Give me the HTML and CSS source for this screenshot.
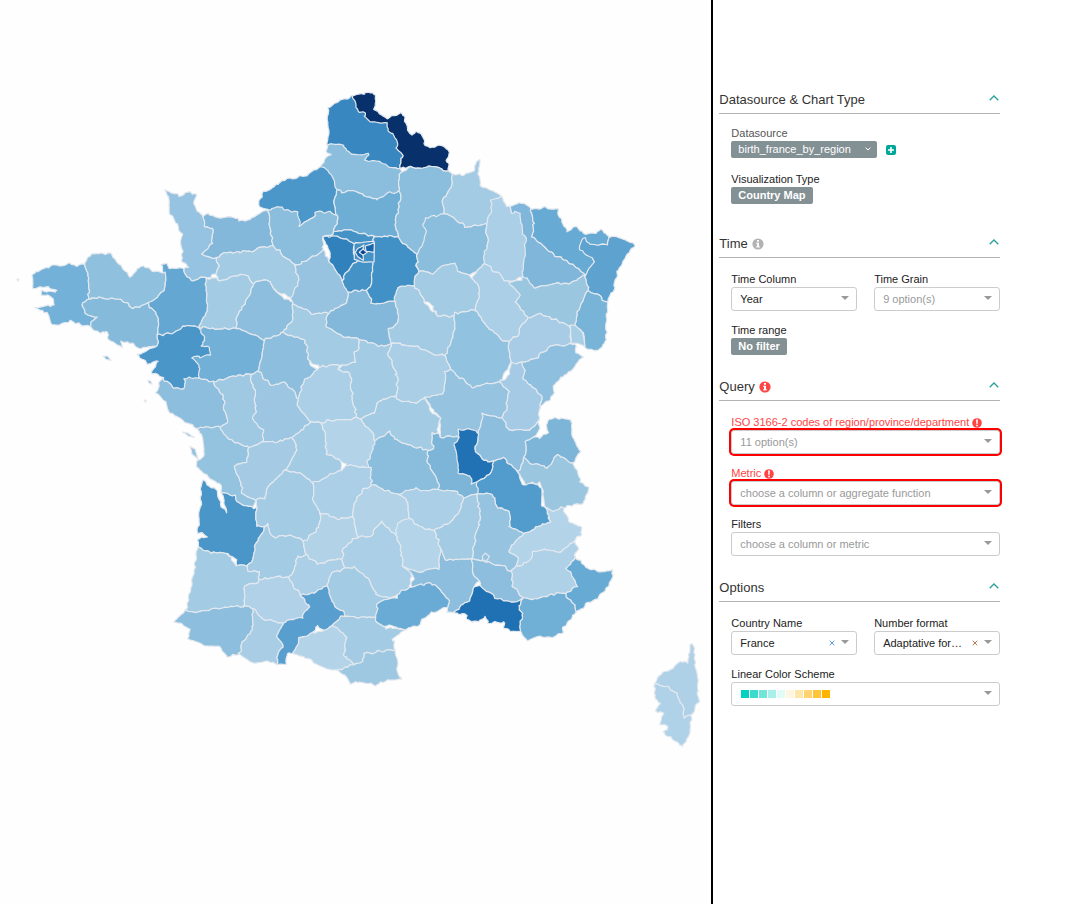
FILE: index.html
```html
<!DOCTYPE html>
<html lang="en">
<head>
<meta charset="utf-8">
<title>Country Map</title>
<link rel="stylesheet" href="styles.css">
</head>
<body>
<main class="explore">
  <section class="chart" aria-label="Country map of France">
    <svg class="map" id="map" viewBox="0 0 711 760" role="img" aria-label="Births by department"></svg>
  </section>
  <aside class="panel">
    <section class="group group-first">
      <header class="group-head"><h2>Datasource &amp; Chart Type</h2><button class="fold" type="button" aria-label="Collapse"><svg viewBox="0 0 10 6"><path d="M.7 5.3 5 1l4.3 4.3"/></svg></button></header>
      <div class="fields">
        <div class="field"><span class="label muted">Datasource</span>
          <div class="line"><button class="pill pill-menu" type="button">birth_france_by_region<svg viewBox="0 0 6 4"><path d="M.6.6 3 3 5.4.6"/></svg></button><button class="add" type="button" aria-label="Add"><svg viewBox="0 0 10 10"><rect width="10" height="10" rx="2"/><path d="M5 2v6M2 5h6"/></svg></button></div></div>
        <div class="field field-tall"><span class="label">Visualization Type</span><button class="pill" type="button">Country Map</button></div>
      </div>
    </section>
    <section class="group">
      <header class="group-head"><h2>Time</h2><svg class="info" viewBox="0 0 12 12"><circle cx="6" cy="6" r="5.6"/><path d="M5 2h2v1.7H5zM4.3 4.7H7v3.6h.8v1.3H4.2V8.3H5V6h-.7z"/></svg><button class="fold" type="button" aria-label="Collapse"><svg viewBox="0 0 10 6"><path d="M.7 5.3 5 1l4.3 4.3"/></svg></button></header>
      <div class="fields">
        <div class="pair">
          <div class="field"><label class="label" for="tc">Time Column</label><div class="box"><select id="tc"><option>Year</option></select></div></div>
          <div class="field"><label class="label" for="tg">Time Grain</label><div class="box"><select id="tg" class="hint"><option>9 option(s)</option></select></div></div>
        </div>
        <div class="field"><span class="label">Time range</span><button class="pill" type="button">No filter</button></div>
      </div>
    </section>
    <section class="group">
      <header class="group-head"><h2>Query</h2><svg class="info error" viewBox="0 0 12 12"><circle cx="6" cy="6" r="5.6"/><path d="M5 2h2v1.7H5zM4.3 4.7H7v3.6h.8v1.3H4.2V8.3H5V6h-.7z"/></svg><button class="fold" type="button" aria-label="Collapse"><svg viewBox="0 0 10 6"><path d="M.7 5.3 5 1l4.3 4.3"/></svg></button></header>
      <div class="fields">
        <div class="field"><label class="label bad" for="iso">ISO 3166-2 codes of region/province/department<svg class="warn" viewBox="0 0 10 10"><circle cx="5" cy="5" r="4.8"/><path d="M4.1 1.5h1.8L5.6 6H4.4zM4.2 6.8h1.6v1.5H4.2z"/></svg></label><div class="box box-bad"><select id="iso" class="hint"><option>11 option(s)</option></select></div></div>
        <div class="field"><label class="label bad" for="metric">Metric<svg class="warn" viewBox="0 0 10 10"><circle cx="5" cy="5" r="4.8"/><path d="M4.1 1.5h1.8L5.6 6H4.4zM4.2 6.8h1.6v1.5H4.2z"/></svg></label><div class="box box-bad"><select id="metric" class="hint"><option>choose a column or aggregate function</option></select></div></div>
        <div class="field"><label class="label" for="filters">Filters</label><div class="box"><select id="filters" class="hint"><option>choose a column or metric</option></select></div></div>
      </div>
    </section>
    <section class="group">
      <header class="group-head"><h2>Options</h2><button class="fold" type="button" aria-label="Collapse"><svg viewBox="0 0 10 6"><path d="M.7 5.3 5 1l4.3 4.3"/></svg></button></header>
      <div class="fields">
        <div class="pair">
          <div class="field"><label class="label" for="country">Country Name</label><div class="box clearable"><select id="country"><option>France</option></select><button class="clear clear-blue" type="button" aria-label="Clear"><svg viewBox="0 0 6 6"><path d="M.7.7l4.6 4.6M5.3.7.7 5.3"/></svg></button></div></div>
          <div class="field"><label class="label" for="nf">Number format</label><div class="box clearable"><select id="nf"><option>Adaptative formatting</option></select><button class="clear" type="button" aria-label="Clear"><svg viewBox="0 0 6 6"><path d="M.7.7l4.6 4.6M5.3.7.7 5.3"/></svg></button></div></div>
        </div>
        <div class="field"><span class="label" id="scheme-label">Linear Color Scheme</span><div class="box"><button class="scheme" type="button" aria-labelledby="scheme-label"><i class="s1"></i><i class="s2"></i><i class="s3"></i><i class="s4"></i><i class="s5"></i><i class="s6"></i><i class="s7"></i><i class="s8"></i><i class="s9"></i><i class="s10"></i></button></div></div>
      </div>
    </section>
  </aside>
</main>
<script src="map.js"></script>
</body>
</html>
```
FILE: styles.css
```css
* { box-sizing: border-box; }
body { margin: 0; background: #fff; color: #333; font: 11px/15px "Liberation Sans", Arial, sans-serif; }
.explore { display: grid; grid-template-columns: minmax(0, 2fr) minmax(0, 1fr); min-height: 100vh; }
.chart { background: #fefefe; }
.map { display: block; width: 100%; }
.map path { stroke: #e3e8ee; stroke-width: 1.2; stroke-linejoin: round; }
.panel { border-left: 2px solid #000; padding: 90px 67px 20px 6px; }
.group { margin-bottom: 22px; }
.group-first { margin-bottom: 30px; }
.group-head { display: flex; align-items: center; gap: 4px; height: 24px; padding-bottom: 4px; border-bottom: 1px solid #b3b3b3; }
h2 { margin: 0; font-size: 13px; line-height: 18px; font-weight: 400; color: #333; }
button { font: inherit; border: 0; padding: 0; background: none; }
.fold { margin-left: auto; display: flex; padding: 0 1px 4px; }
.fold svg { width: 10px; height: 6px; fill: none; stroke: #2aa198; stroke-width: 1.3; }
.info { width: 12px; height: 12px; fill: #b3b3b3; }
.info path, .warn path { fill: #fff; }
.info.error, .warn { fill: #ff4444; }
.warn { width: 10px; height: 10px; margin-left: 3px; }
.fields { display: flex; flex-direction: column; gap: 12px; padding: 14px 0 0 12px; }
.group-first .fields { padding-top: 12px; }
.field { display: flex; flex-direction: column; align-items: flex-start; min-width: 0; }
.field-tall { margin-top: 2px; }
.pair { display: grid; grid-template-columns: minmax(0, 1fr) minmax(0, 1fr); gap: 17px; }
.label { display: flex; align-items: center; line-height: 15px; white-space: nowrap; color: #222; }
.muted { color: #555; }
.bad { color: #ff4444; }
.line { display: flex; align-items: center; gap: 9px; }
.pill { display: flex; align-items: center; height: 17px; padding: 0 7px 1px; background: #839094; border-radius: 2px; color: #fff; font-weight: 700; white-space: nowrap; }
.pill-menu { font-weight: 400; padding-right: 6px; gap: 14px; }
.pill-menu svg { width: 6px; height: 4px; fill: none; stroke: #fff; }
.add { display: flex; }
.add svg { width: 10px; height: 10px; fill: #00a699; stroke: #fff; stroke-width: 1.6; }
.add rect { stroke: none; }
.box { position: relative; width: 100%; height: 24px; border: 1px solid #ccc; border-radius: 3px; background: #fff; }
.box::after { content: ""; position: absolute; right: 7px; top: 8px; border: 4px solid transparent; border-top-color: #999; border-bottom: 0; pointer-events: none; }
.box-bad { box-shadow: 0 0 0 2px #f00; }
select { appearance: none; width: 100%; height: 22px; padding: 0 20px 0 8px; border: 0; background: none; font: inherit; color: #222; text-overflow: ellipsis; white-space: nowrap; overflow: hidden; }
.clearable select { padding-right: 36px; }
.hint { color: #999; }
.clear { position: absolute; right: 20px; top: 7px; display: flex; padding: 1px; }
.clear svg { width: 6px; height: 6px; fill: none; stroke: #c07a55; }
.clear-blue svg { stroke: #5b9bd5; }
.scheme { display: flex; align-items: center; gap: 1px; width: 100%; height: 22px; padding-left: 9px; }
.scheme i { width: 8px; height: 8px; }
.s1 { background: #00d1c1; }
.s2 { background: #3adbce; }
.s3 { background: #72e5db; }
.s4 { background: #aaf0ea; }
.s5 { background: #e2faf8; }
.s6 { background: #fff6e0; }
.s7 { background: #ffe5a8; }
.s8 { background: #ffd470; }
.s9 { background: #ffc438; }
.s10 { background: #ffb400; }
```
FILE: map.js
```js
// Departments: fill colour, then outline as x,y pairs.
const departments = `
#3987c1 353,97 347,98 340,100 334,103 329,107 327,123 328,135 327,145 333,148 345,155 365,160 385,169 401,171 405,140 380,115
#08306b 353,97 362,94 373,92 376,100 375,109 382,113 388,119 394,115 401,113 405,119 407,130 411,135 417,132 423,136 425,147 435,146 442,145 449,152 447,160 449,165 447,171 442,169 428,166 417,168 400,168 402,155 396,147 397,139 392,133 387,130 387,123 373,123 365,117 365,113 358,112 355,103
#8bbedd 328,143 339,143 345,148 352,154 368,154 367,162 380,162 390,167 402,169 398,180 400,192 388,197 377,200 336,190 321,166 325,158 330,155 327,150
#6eaed5 335,188 342,193 352,191 363,195 377,199 388,193 399,192 398,212 394,223 399,236 373,236 353,232 333,232 336,213
#8bbedd 402,169 413,167 428,166 447,171 452,173 451,187 443,197 443,213 430,240 417,253 403,243 399,234 394,223 398,212 400,197 398,180
#a3cbe4 452,173 463,175 473,171 476,162 481,159 478,173 481,186 492,190 503,197 505,205 495,226 465,226 443,213 443,197 451,187
#8bbedd 425,218 442,213 453,217 465,224 486,224 487,247 485,263 470,274 458,272 442,273 433,275 420,270 417,265 417,253 423,240 427,232 423,227
#4c97ca 321,166 333,177 335,188 334,197 336,213 315,215 300,225 280,212 268,211 258,205 263,193 282,181 307,175 315,168
#80b6d9 510,207 515,204 523,203 530,208 534,223 532,237 550,252 570,263 585,274 568,284 550,284 533,288 522,280
#67aad4 530,208 538,209 545,207 557,210 562,222 568,231 577,227 583,233 592,234 602,230 608,237 607,245 590,250 594,262 592,270 585,275 570,263 550,252 532,237 534,223
#5ea3d0 608,238 622,238 635,244 626,256 618,270 613,290 607,303 598,295 588,290 585,275 593,263 593,257 585,254 578,249 584,237 587,243 600,245 607,244
#78b3d8 588,290 598,295 607,303 607,320 606,337 603,347 593,351 585,347 582,333 575,325 578,310
#9bc6e0 507,282 527,277 533,287 550,282 568,282 585,275 588,290 578,310 575,325 570,327 553,319 540,313 528,318 515,302
#a8cce6 528,316 540,311 553,317 570,325 571,343 552,346 537,357 522,363 510,362 507,340 518,335
#abcfe6 491,200 504,198 510,212 520,213 522,230 526,240 522,277 508,282 485,263 483,253 487,240 486,224 491,213
#abcfe6 485,263 477,272 472,278 480,290 475,310 485,325 502,340 518,335 520,327 528,316 517,302 520,295 508,282
#a8cfe6 570,325 575,325 582,332 585,346 577,343 571,343
#8ebfde 522,363 537,357 552,346 571,343 575,343 577,353 582,357 570,370 553,385 553,395 539,408 543,398 535,390 523,379 524,370
#91c2df 455,313 473,310 485,325 502,340 507,340 508,360 500,382 472,387 450,370 445,355 453,337
#a3cbe3 417,272 433,275 442,265 455,263 458,272 470,274 480,290 475,310 454,316 437,315 430,303 422,295 413,285
#95c3e0 445,372 450,370 472,387 500,382 508,391 506,410 502,418 483,414 477,435 459,429 458,437 440,437 440,417 425,398 443,393
#a5cae5 510,362 522,363 524,370 523,379 535,390 543,398 537,409 539,421 530,430 509,430 502,418 506,410 508,391 500,382 509,375
#8dbedd 483,414 502,418 509,430 530,430 539,422 540,430 533,437 525,443 525,457 518,473 503,457 492,462 475,452 477,437
#7db5d9 525,443 540,437 548,432 545,424 553,418 571,419 572,437 581,452 572,463 557,455 547,468 528,463
#9bc6e0 528,463 547,468 557,455 572,463 579,473 580,483 588,488 583,502 563,507 553,511 545,507 540,483 530,483 528,488 517,473 525,457
#7db5d9 433,431 440,437 458,437 470,440 490,480 477,493 463,498 457,491 438,489 438,483 427,460 427,450 432,449
#529bcd 503,457 517,473 522,485 532,483 542,488 541,503 549,517 549,522 524,533 509,527 509,510 497,508 495,498 487,493 477,494 477,483 490,473 493,465
#2171b5 459,429 473,429 477,437 475,452 483,460 493,465 490,473 477,483 472,483 470,476 458,473 457,453 453,445 459,437
#a3cbe3 397,287 413,285 423,300 437,315 454,316 453,337 445,357 433,353 418,347 390,343 387,330 398,322 398,310 393,300
#aacee5 390,343 418,347 433,353 445,357 450,368 443,373 443,393 423,400 415,403 397,398 396,373 388,355
#a3cbe3 360,418 375,412 375,403 397,394 402,402 415,403 427,399 432,412 440,417 437,433 432,430 432,448 427,450 400,442 388,432 375,440 372,433
#a3cbe3 358,338 380,346 390,343 388,355 396,373 397,394 375,403 375,412 357,418 352,400 350,373 338,370 342,365 355,362 353,353 358,350
#abcfe6 320,367 338,365 340,372 350,375 352,397 357,418 337,420 310,422 298,408 298,398 303,380 317,370
#a3cbe3 293,304 313,314 327,312 327,327 337,335 358,337 358,350 353,353 355,362 340,366 320,366 308,360 305,340 295,337 283,332 292,320
#84b8da 347,292 367,290 372,303 393,300 398,310 398,322 387,330 393,343 380,346 358,337 337,335 327,327 327,312 343,305
#97c3e0 323,250 330,262 342,281 347,283 347,300 327,312 313,314 293,304 290,290 299,280 293,265 307,260
#3181bd 323,237 337,237 355,243 353,253 357,260 348,270 342,282 337,272 329,262 328,247
#4592c6 332,230 350,230 375,237 374,243 372,243 357,243 337,237 323,237 331,235
#4592c6 357,260 373,262 372,283 367,290 347,291 344,280 350,268
#4190c6 375,237 398,235 403,243 417,253 417,265 417,272 412,285 395,287 394,297 380,303 370,302 367,290 372,280 373,262 374,243
#4592c6 354,243 374,241 374,262 363,262 354,259
#1a66ab 365,246 374,243 374,252 366,251
#1a66ab 364,245 358,248 355,252 358,257 363,260 363,245
#08458c 359,252 363,249 367,252 363,255
#95c3e1 165,191 180,196 190,192 196,195 194,203 203,217 205,227 213,228 213,242 202,254 216,258 219,267 216,275 205,277 190,280 185,273 183,268 189,267 182,260 182,233 170,213 169,197
#84b8da 203,217 208,214 220,217 233,217 245,222 258,214 268,211 270,227 273,246 257,248 222,253 216,258 202,254 213,242 213,228 205,227
#8bbedd 268,211 278,207 297,213 302,223 315,212 336,213 337,225 332,235 323,237 323,250 307,260 293,265 285,257 273,246 270,227
#a3cbe3 216,258 222,253 253,251 273,246 285,257 293,265 299,280 291,298 273,288 267,279 253,283 245,273 220,280 216,275 219,267
#a3cbe3 205,277 220,280 245,273 252,283 248,297 237,317 237,328 223,329 198,327 207,310
#8dbedd 252,283 267,279 273,288 293,304 292,320 283,332 265,340 237,328 237,317 248,297
#74b1d8 33,275 41,270 52,265 62,265 70,262 77,266 84,263 89,277 89,298 82,303 85,313 96,317 90,327 80,325 70,320 60,325 52,325 48,313 36,308 45,306 55,305 53,297 42,295 42,291 58,291 48,287 33,288
#8fc1de 84,263 88,257 97,253 112,253 117,262 130,276 143,266 152,270 162,272 165,280 164,290 149,302 133,308 125,302 112,298 89,298
#86badb 82,303 89,298 112,298 125,302 133,308 149,302 153,308 158,317 157,345 142,348 134,345 127,341 120,342 123,347 108,338 107,332 100,333 92,329 96,317 85,313
#64a7d2 162,265 167,264 169,269 183,268 190,280 205,277 207,310 198,327 187,325 170,333 158,335 158,317 149,307 152,301 164,290 165,273
#72b0d7 198,327 223,329 237,328 265,340 258,370 243,375 228,378 213,382 198,377 193,358
#4a96c9 158,335 175,332 187,325 198,327 206,340 200,345 210,347 210,355 193,358 199,365 197,377 190,383 185,378 183,390 173,387 162,378 152,372 158,361 147,363 138,355 157,345
#8dbedd 162,380 173,387 183,390 187,380 198,377 213,382 223,397 227,422 210,427 197,428 185,422 170,413 165,403 156,392
#9fc8e2 213,382 228,378 250,374 254,390 255,413 263,430 262,442 248,448 223,437 220,427 227,422 223,397
#9cc6e1 250,374 257,370 270,385 285,382 298,398 298,408 310,422 293,437 277,442 263,442 260,427 253,417 254,390
#8dbedd 265,340 283,332 305,341 308,360 317,370 303,380 298,398 285,382 270,385 257,370
#b3d3e9 320,422 337,420 360,420 374,440 370,458 367,467 347,465 342,462 327,453 325,437
#a3cbe4 293,437 312,423 320,422 325,437 327,453 342,462 340,470 313,483 303,475 285,470 297,450
#93c3df 198,430 210,425 220,427 227,437 250,449 247,462 234,465 240,477 242,493 255,500 253,507 240,505 234,495 222,493 220,485 207,475 197,467 198,460 205,453 203,440
#a5cbe4 250,449 263,442 277,442 293,439 297,450 285,470 267,488 265,498 255,500 242,493 240,477 234,465 247,462
#4a96c9 202,480 204,478 217,490 220,503 227,513 223,494 234,495 240,505 257,507 256,525 267,525 260,535 254,548 251,563 237,566 237,560 225,552 210,552 197,548 198,537 207,537 202,532 197,533 200,505
#a3cbe4 285,470 303,475 313,483 313,499 320,512 319,527 303,541 292,535 273,537 267,525 256,525 257,507 255,500 265,498 267,487
#abcfe6 313,483 340,470 348,465 370,467 372,485 363,490 353,503 353,517 338,519 322,512 313,499
#8bbedd 374,440 388,432 402,443 427,450 427,460 438,483 438,489 420,491 397,494 372,485 370,467 367,460
#b2d2e8 363,490 372,485 397,494 407,500 410,517 395,535 382,520 370,537 357,537 353,517 353,503
#abcfe6 397,493 417,488 438,490 457,491 463,498 460,510 450,522 435,530 417,526 410,517 407,500
#b4d4ea 394,537 398,522 410,517 417,526 435,530 441,550 438,568 422,572 402,567 401,550
#b2d2e8 320,512 338,519 353,517 357,537 342,550 342,558 318,564 305,555 303,542 319,527
#abcfe6 357,537 370,537 382,520 395,535 401,550 402,567 410,572 412,583 397,593 390,598 377,595 367,577 353,567 344,568 342,550
#a3cbe4 267,525 273,537 292,535 303,541 304,554 297,557 295,568 289,577 258,580 260,572 248,570 252,557 254,548 261,535
#abcfe6 297,557 305,555 318,564 342,558 344,568 332,573 327,586 313,593 299,594 289,577 295,568
#a3cbe3 332,573 344,568 353,567 367,577 377,595 390,598 378,603 376,617 360,617 347,616 333,605 327,586
#a3cbe3 197,548 210,552 225,552 237,566 248,565 248,570 260,572 257,583 245,585 243,606 215,609 185,611 192,583 195,563
#8dbedd 185,611 200,612 215,609 243,606 253,608 253,627 242,643 240,654 228,657 220,647 205,645 188,638 190,628 173,621
#b0d1e8 245,585 275,577 289,577 299,594 310,607 302,618 283,623 262,619 253,608 243,606
#a9cde5 253,608 262,619 283,623 277,635 283,647 277,653 277,663 265,661 253,663 240,654 242,643 252,630
#b3d3e9 293,653 300,638 313,633 323,630 333,625 346,637 344,656 355,664 337,670 322,667 307,658
#589fcf 299,594 313,593 327,586 333,605 347,616 333,625 323,630 317,625 312,635 300,638 293,653 286,653 285,663 277,663 277,653 283,647 277,635 288,619 302,618 305,610 310,607
#a3cbe3 333,625 340,617 360,617 376,618 383,627 405,629 393,638 395,650 388,650 364,654 362,662 355,664 344,656 346,637
#9ec8e2 336,671 355,664 362,662 364,654 388,650 396,653 397,670 401,679 387,680 373,685 360,681 350,684 345,675
#8dbedd 402,567 408,569 422,572 438,568 441,550 445,560 472,559 473,573 479,580 473,587 470,599 452,613 447,612 449,600 430,583 412,587 415,578 410,572
#69abd4 375,620 378,603 397,597 397,592 408,587 430,583 438,587 449,600 447,607 430,613 417,625 405,629 388,624 383,627
#a3cbe3 435,530 450,522 460,510 463,498 477,492 480,517 476,533 472,559 445,560 441,550
#95c3e0 477,494 487,493 495,498 497,508 509,510 509,527 523,533 517,540 508,550 518,558 517,567 511,570 490,562 472,559 476,533 480,517
#95c3e0 482,556 485,553 489,556 487,560 483,560
#8dbedd 472,559 490,562 511,570 513,587 523,598 513,602 495,597 480,586 479,580 473,573
#b3d3e9 524,533 549,522 545,507 555,511 565,508 570,523 580,525 582,533 575,540 562,551 543,549 527,563 517,567 518,558 508,550 517,540
#aed1e8 577,538 578,547 575,557 567,567 577,586 564,594 535,599 523,597 515,587 511,570 527,563 532,553 543,549 562,551
#67aad3 575,557 585,566 598,572 611,569 612,577 603,593 580,608 576,613 575,605 564,594 577,586 567,567
#70afd6 523,598 535,599 550,594 564,594 575,605 576,614 562,627 563,632 550,637 538,637 527,639 519,632 522,613 518,605
#2070b4 452,613 470,599 473,587 480,586 495,597 513,602 523,598 518,605 522,613 519,633 504,629 503,622 488,623 484,616 479,622 467,620 467,615
#aed1e8 692,643 694,650 694,663 698,680 698,700 691,715 684,717 683,707 675,693 667,687 654,683 657,677 663,672 672,668 680,661 688,663 689,653 689,643
#b0d2e8 654,683 667,687 675,693 683,707 684,717 691,715 690,732 683,746 672,739 663,732 667,727 659,723 663,713 655,710 660,703 654,697
#78b3d8 17,279 19,279 18,281
#74b1d8 103,356 107,356 111,360 106,359
#8dbedd 148,380 151,381 152,384 149,383
#8dbedd 144,400 146,400 146,402
#93c3df 183,432 188,433 194,437 189,436
#93c3df 190,446 195,449 198,459 192,454`;

// Value noise on a 3px lattice, so that neighbours share the same ragged border.
function hash(ix, iy, seed) {
  let h = Math.imul(ix, 374761393) + Math.imul(iy, 668265263) + seed * 1442695;
  h = Math.imul(h ^ (h >>> 13), 1274126177);
  return ((h ^ (h >>> 16)) >>> 0) / 4294967295 - 0.5;
}
function noise(x, y, seed) {
  const gx = x / 3, gy = y / 3, ix = Math.floor(gx), iy = Math.floor(gy);
  const fx = gx - ix, fy = gy - iy;
  const top = hash(ix, iy, seed) * (1 - fx) + hash(ix + 1, iy, seed) * fx;
  const low = hash(ix, iy + 1, seed) * (1 - fx) + hash(ix + 1, iy + 1, seed) * fx;
  return top * (1 - fy) + low * fy;
}

// Vertices closer than this are one vertex.
const known = [];
function snap(p) {
  const hit = known.find(k => Math.hypot(k[0] - p[0], k[1] - p[1]) < 2.9);
  if (hit) return hit;
  known.push(p);
  return p;
}

// Vertices of neighbours that lie along the edge from a to b, in order.
function along(a, b, own) {
  const dx = b[0] - a[0], dy = b[1] - a[1], len = Math.hypot(dx, dy);
  if (len < 4) return [];
  return known
    .filter(k => !own.includes(k))
    .map(k => ({
      k,
      t: ((k[0] - a[0]) * dx + (k[1] - a[1]) * dy) / (len * len),
      d: Math.abs((k[0] - a[0]) * dy - (k[1] - a[1]) * dx) / len
    }))
    .filter(o => o.d < 3 && o.t > 0.06 && o.t < 0.94)
    .sort((m, n) => m.t - n.t)
    .map(o => o.k);
}

const shapes = departments.trim().split("\n").map(row => {
  const [fill, ...pairs] = row.split(" ");
  const raw = pairs.map(s => s.split(",").map(Number));
  const xs = raw.map(p => p[0]);
  const small = Math.max(...xs) - Math.min(...xs) < 21;
  return { fill, small, points: small ? raw : raw.map(snap) };
});

const svg = document.getElementById("map");
for (const { fill, small, points } of shapes) {
  const ring = small ? points : points.flatMap((a, i) =>
    [a, ...along(a, points[(i + 1) % points.length], points)]);
  const size = small ? 0.6 : 3.4;
  const out = [];
  ring.forEach((a, i) => {
    const b = ring[(i + 1) % ring.length];
    const steps = Math.max(1, Math.round(Math.hypot(b[0] - a[0], b[1] - a[1]) / 2));
    for (let s = 0; s < steps; s++) {
      const x = a[0] + (b[0] - a[0]) * s / steps;
      const y = a[1] + (b[1] - a[1]) * s / steps;
      out.push((x + noise(x, y, 1) * size).toFixed(1) + " " + (y + noise(x, y, 7) * size).toFixed(1));
    }
  });
  const path = document.createElementNS("http://www.w3.org/2000/svg", "path");
  path.setAttribute("d", "M" + out.join("L") + "Z");
  path.setAttribute("fill", fill);
  svg.append(path);
}
```
